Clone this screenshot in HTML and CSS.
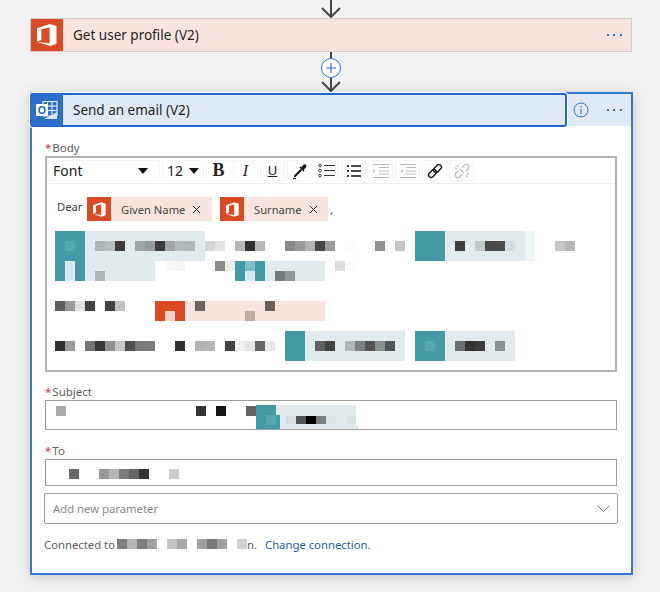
FILE: index.html
```html
<!DOCTYPE html>
<html lang="en">
<head>
<meta charset="utf-8">
<title>Send an email</title>
<link rel="stylesheet" href="styles.css">
</head>
<body>
<main class="flow">
  <svg class="arrow-top" width="24" height="18" viewBox="0 0 24 18"><path d="M12 0V16M3 8l9 9 9-9" fill="none" stroke="#484644" stroke-width="2"/></svg>

  <section class="step step-office">
    <div class="step-icon icon-office">
      <svg width="20" height="22" viewBox="0 0 20 22"><path fill="#fff" d="M0 17.8V4.3L12.6 0l6.9 2v18l-6.9 2L0 17.8l12.6 1.5V3.4L4.4 5.2v10.8z"/></svg>
    </div>
    <div class="step-title">Get user profile (V2)</div>
    <div class="dots"><i></i><i></i><i></i></div>
  </section>

  <svg class="connector" width="24" height="40" viewBox="0 0 24 40"><path d="M12 0V6M12 26V38M3 30l9 9 9-9" fill="none" stroke="#484644" stroke-width="2"/><circle cx="12" cy="16" r="9.5" fill="#fff" stroke="#2f6fc9"/><path d="M7 16H17M12 11V21" stroke="#2f6fc9" stroke-width="1.2"/></svg>

  <section class="card">
    <header class="card-head">
      <div class="title-box">
        <div class="step-icon icon-outlook">
          <svg width="22" height="20" viewBox="0 0 22 20"><path d="M7 1.500H21V16H7z" fill="#2a6fcb" stroke="#fff"/><path d="M7 6H21M7 10.500H21M11.500 1.500V16M16 1.500V16" stroke="#fff" stroke-width="1"/><path d="M8 19H21V12L14 16z" fill="#dce8f7"/><rect x="0" y="4" width="12" height="12" rx="1" fill="#fff"/><ellipse cx="6" cy="10" rx="3" ry="3.300" fill="none" stroke="#2a6fcb" stroke-width="1.600"/></svg>
        </div>
        <div class="step-title">Send an email (V2)</div>
      </div>
      <div class="head-actions">
        <svg width="16" height="16" viewBox="0 0 16 16"><circle cx="8" cy="8" r="7" fill="none" stroke="#2f6fc9"/><path d="M8 7V12M8 4V5.500" stroke="#2f6fc9" stroke-width="1.200"/></svg>
        <div class="dots"><i></i><i></i><i></i></div>
      </div>
    </header>

    <div class="card-body">
      <label class="field-label first"><span class="req">*</span>Body</label>
      <div class="editor">
        <div class="toolbar">
          <div class="tb tb-font"><span>Font</span><b class="caret"></b></div>
          <div class="tb tb-size"><span>12</span><b class="caret"></b></div>
          <div class="tb tb-b">B</div>
          <div class="tb tb-i">I</div>
          <div class="tb tb-u">U</div>
          <div class="tb"><svg width="16" height="16" viewBox="0 0 16 16"><path d="M2 12.500L8.500 6l1.500 1.500L3.500 14H2z" fill="#111"/><path d="M9 4.500l2.500-2.700a1.500 1.500 0 0 1 2.500 2.500L11.500 7z" fill="#111"/><path d="M8 4l4 4" stroke="#111" stroke-width="1.500"/><path d="M1 15.500H4" stroke="#111"/></svg></div>
          <div class="tb"><svg width="17" height="15" viewBox="0 0 17 15"><path d="M6 2.500H17M6 7.500H17M6 12.500H17" stroke="#333" stroke-width="1.200"/><g fill="none" stroke="#333"><circle cx="2" cy="2.500" r="1.300"/><circle cx="2" cy="7.500" r="1.300"/><circle cx="2" cy="12.500" r="1.300"/></g></svg></div>
          <div class="tb"><svg width="14" height="14" viewBox="0 0 14 14"><path d="M4 2H14M4 7H14M4 12H14" stroke="#111" stroke-width="1.500"/><path d="M0 1H2V3H0zM0 6H2V8H0zM0 11H2V13H0z" fill="#333"/></svg></div>
          <div class="tb"><svg width="18" height="14" viewBox="0 0 18 14"><path d="M1 .5H17M7 3.500H17M7 7H17M7 10H17M1 13.500H17" stroke="#bbb"/><path d="M1 5l3 2-3 2z" fill="#ccc"/></svg></div>
          <div class="tb"><svg width="18" height="14" viewBox="0 0 18 14"><path d="M1 .5H17M7 3.500H17M7 7H17M7 10H17M1 13.500H17" stroke="#bbb"/><path d="M4 5L1 7l3 2z" fill="#ccc"/></svg></div>
          <div class="tb"><svg width="16" height="16" viewBox="0 0 16 16"><g fill="none" stroke="#111" stroke-width="1.400"><rect x="8" y="1" width="5" height="9" rx="2.500" transform="rotate(45 10.500 5.500)"/><rect x="3" y="6" width="5" height="9" rx="2.500" transform="rotate(45 5.500 10.500)"/></g></svg></div>
          <div class="tb"><svg width="16" height="16" viewBox="0 0 16 16"><g fill="none" stroke="#bbb" stroke-width="1.300"><path d="M8 5l2.500-3a2.700 2.700 0 0 1 4 3.500L12 8"/><path d="M8 11l-2.500 3a2.700 2.700 0 0 1-4-3.500L4 8"/><path d="M6 6l4 4M3 2l1 2M1 5l2 .5M13 14l-1-2M15 11l-2-.5"/></g></svg></div>
        </div>

        <div class="editor-text">
          <div class="token-line">
            <span class="dear">Dear</span>
            <span class="chip chip-given"><span class="chip-icon"><svg width="13" height="15" viewBox="0 0 20 22"><path fill="#fff" d="M0 17.8V4.3L12.6 0l6.900 2v18l-6.900 2L0 17.800l12.600 1.500V3.400L4.400 5.200v10.800z"/></svg></span><span class="chip-text">Given Name</span><svg class="chip-x" width="9" height="9" viewBox="0 0 10 10"><path d="M1 1l8 8M9 1L1 9" stroke="#222" stroke-width="1.100"/></svg></span>
            <span class="chip chip-surname"><span class="chip-icon"><svg width="13" height="15" viewBox="0 0 20 22"><path fill="#fff" d="M0 17.8V4.3L12.6 0l6.900 2v18l-6.900 2L0 17.800l12.600 1.500V3.400L4.400 5.200v10.800z"/></svg></span><span class="chip-text">Surname</span><svg class="chip-x" width="9" height="9" viewBox="0 0 10 10"><path d="M1 1l8 8M9 1L1 9" stroke="#222" stroke-width="1.100"/></svg></span>
            <span class="comma">,</span>
          </div>

          <svg class="mosaic" width="525" height="130" viewBox="55 231 525 130" shape-rendering="crispEdges">
            <rect x="55" y="231" width="30" height="50" fill="#439ba5"/><rect x="65" y="241" width="10" height="10" fill="#53a7b0"/><rect x="65" y="261" width="10" height="20" fill="#d9eaee"/>
            <rect x="85" y="231" width="120" height="30" fill="#e1eaec"/><rect x="85" y="261" width="70" height="20" fill="#e1eaec"/>
            <g>
              <rect x="95" y="241" width="10" height="10" fill="#afb7b9"/><rect x="105" y="241" width="10" height="10" fill="#b8bfc0"/><rect x="115" y="241" width="10" height="10" fill="#3b3a39"/><rect x="135" y="241" width="10" height="10" fill="#a0a6a8"/><rect x="145" y="241" width="10" height="10" fill="#959a9c"/><rect x="155" y="241" width="10" height="10" fill="#3e3c3b"/><rect x="165" y="241" width="10" height="10" fill="#a1a5a7"/><rect x="175" y="241" width="10" height="10" fill="#b4bbbd"/><rect x="185" y="241" width="10" height="10" fill="#b1b8ba"/><rect x="205" y="241" width="10" height="10" fill="#d5d5d5"/><rect x="215" y="241" width="10" height="10" fill="#e3e3e3"/><rect x="235" y="241" width="10" height="10" fill="#b7b7b7"/><rect x="245" y="241" width="10" height="10" fill="#32302f"/><rect x="255" y="241" width="10" height="10" fill="#b8b8b8"/><rect x="285" y="241" width="10" height="10" fill="#888"/><rect x="295" y="241" width="10" height="10" fill="#999"/><rect x="305" y="241" width="10" height="10" fill="#b3b3b3"/><rect x="315" y="241" width="10" height="10" fill="#484644"/><rect x="325" y="241" width="10" height="10" fill="#9c9c9c"/><rect x="345" y="241" width="10" height="10" fill="#fcfcfc"/><rect x="375" y="241" width="10" height="10" fill="#919191"/><rect x="395" y="241" width="10" height="10" fill="#c3c3c3"/>
            </g>
            <rect x="415" y="231" width="30" height="30" fill="#439ba5"/><rect x="445" y="231" width="80" height="30" fill="#e1eaec"/><rect x="525" y="231" width="10" height="30" fill="#eff5f6"/>
            <rect x="455" y="241" width="10" height="10" fill="#3f3f3f"/><rect x="475" y="241" width="10" height="10" fill="#c2cacc"/><rect x="485" y="241" width="10" height="10" fill="#4a4a4a"/><rect x="495" y="241" width="10" height="10" fill="#4c4e4e"/><rect x="505" y="241" width="10" height="10" fill="#d5dde0"/><rect x="555" y="241" width="10" height="10" fill="#c7c7c7"/><rect x="565" y="241" width="10" height="10" fill="#b8b8b8"/>
            <rect x="95" y="271" width="10" height="10" fill="#adb5b7"/><rect x="165" y="261" width="10" height="10" fill="#f9f9f9"/><rect x="175" y="261" width="10" height="10" fill="#f5f5f5"/><rect x="215" y="261" width="10" height="10" fill="#8c8b8a"/><rect x="225" y="261" width="10" height="10" fill="#ececec"/>
            <rect x="235" y="261" width="30" height="20" fill="#439ba5"/><rect x="245" y="261" width="10" height="10" fill="#7fc0c8"/><rect x="245" y="271" width="10" height="10" fill="#d9eaee"/><rect x="265" y="261" width="60" height="20" fill="#e1eaec"/><rect x="275" y="271" width="10" height="10" fill="#757a7b"/><rect x="285" y="271" width="10" height="10" fill="#929899"/>
            <rect x="335" y="261" width="10" height="10" fill="#dcdcdc"/><rect x="345" y="261" width="10" height="10" fill="#fbfbfb"/>
            <rect x="55" y="301" width="10" height="10" fill="#5f5e5d"/><rect x="65" y="301" width="10" height="10" fill="#999"/><rect x="75" y="301" width="10" height="10" fill="#e0e0e0"/><rect x="85" y="301" width="10" height="10" fill="#434241"/><rect x="105" y="301" width="10" height="10" fill="#434241"/><rect x="115" y="301" width="10" height="10" fill="#c2c2c2"/>
            <rect x="155" y="301" width="30" height="20" fill="#dc4a21"/><rect x="165" y="311" width="10" height="10" fill="#f5d0c5"/><rect x="185" y="301" width="140" height="20" fill="#f9e5df"/><rect x="195" y="301" width="10" height="10" fill="#6d625e"/><rect x="265" y="301" width="10" height="10" fill="#6b5f5c"/><rect x="245" y="311" width="10" height="10" fill="#bdaea8"/>
            <rect x="55" y="341" width="10" height="10" fill="#33312f"/><rect x="65" y="341" width="10" height="10" fill="#999"/><rect x="85" y="341" width="10" height="10" fill="#737373"/><rect x="95" y="341" width="10" height="10" fill="#393837"/><rect x="105" y="341" width="10" height="10" fill="#8f8f8f"/><rect x="115" y="341" width="10" height="10" fill="#c8c8c8"/><rect x="125" y="341" width="10" height="10" fill="#504f4e"/><rect x="135" y="341" width="10" height="10" fill="#797877"/><rect x="145" y="341" width="10" height="10" fill="#7c7b7a"/><rect x="175" y="341" width="10" height="10" fill="#32312f"/><rect x="195" y="341" width="10" height="10" fill="#b4b4b4"/><rect x="205" y="341" width="10" height="10" fill="#b8b8b8"/><rect x="225" y="341" width="10" height="10" fill="#434241"/><rect x="235" y="341" width="10" height="10" fill="#f0f0f0"/><rect x="245" y="341" width="10" height="10" fill="#e4e4e4"/><rect x="255" y="341" width="10" height="10" fill="#666"/><rect x="265" y="341" width="10" height="10" fill="#e8e8e8"/>
            <rect x="285" y="331" width="20" height="30" fill="#439ba5"/><rect x="305" y="331" width="100" height="30" fill="#e1eaec"/><rect x="315" y="341" width="10" height="10" fill="#5d5f60"/><rect x="325" y="341" width="10" height="10" fill="#434342"/><rect x="345" y="341" width="10" height="10" fill="#aeb6b8"/><rect x="355" y="341" width="10" height="10" fill="#7b8082"/><rect x="365" y="341" width="10" height="10" fill="#525252"/><rect x="375" y="341" width="10" height="10" fill="#8a8f90"/><rect x="385" y="341" width="10" height="10" fill="#505557"/>
            <rect x="415" y="331" width="30" height="30" fill="#439ba5"/><rect x="425" y="341" width="10" height="10" fill="#53a7b0"/><rect x="445" y="331" width="70" height="30" fill="#e1eaec"/><rect x="455" y="341" width="10" height="10" fill="#6b6f71"/><rect x="465" y="341" width="10" height="10" fill="#343331"/><rect x="475" y="341" width="10" height="10" fill="#3e3d3d"/><rect x="495" y="341" width="10" height="10" fill="#8a9193"/>
          </svg>
        </div>
      </div>

      <label class="field-label"><span class="req">*</span>Subject</label>
      <div class="input input-subject">
        <svg class="mosaic" width="310" height="26" viewBox="56 404 310 26" shape-rendering="crispEdges">
          <rect x="56" y="406" width="10" height="10" fill="#aaa"/><rect x="196" y="406" width="10" height="10" fill="#333"/><rect x="216" y="406" width="10" height="10" fill="#141414"/><rect x="246" y="406" width="10" height="10" fill="#666"/>
          <rect x="256" y="405" width="24" height="24" fill="#439ba5"/><rect x="276" y="405" width="80" height="10" fill="#e1eaec"/><rect x="280" y="415" width="76" height="10" fill="#e1eaec"/><rect x="280" y="425" width="79" height="4" fill="#e1eaec"/><rect x="266" y="415" width="10" height="10" fill="#53a7b0"/>
          <rect x="286" y="416" width="10" height="8" fill="#d5dde0"/><rect x="296" y="416" width="10" height="8" fill="#4f5355"/><rect x="306" y="416" width="10" height="8" fill="#000"/><rect x="316" y="416" width="10" height="8" fill="#7b8082"/><rect x="326" y="416" width="10" height="8" fill="#dae3e6"/><rect x="346" y="416" width="10" height="8" fill="#dae3e6"/>
        </svg>
      </div>

      <label class="field-label label-to"><span class="req">*</span>To</label>
      <div class="input input-to">
        <svg class="mosaic" width="120" height="10" viewBox="69 469 120 10" shape-rendering="crispEdges">
          <rect x="69" y="469" width="10" height="10" fill="#6a6a6a"/><rect x="99" y="469" width="10" height="10" fill="#999"/><rect x="109" y="469" width="10" height="10" fill="#b5b5b5"/><rect x="119" y="469" width="10" height="10" fill="#7e7e7e"/><rect x="129" y="469" width="10" height="10" fill="#666"/><rect x="139" y="469" width="10" height="10" fill="#333"/><rect x="169" y="469" width="10" height="10" fill="#ccc"/>
        </svg>
      </div>

      <div class="param">
        <span>Add new parameter</span>
        <svg width="13" height="7" viewBox="0 0 13 7"><path d="M.5 .5L6.500 6.500 12.500 .5" fill="none" stroke="#8a8886"/></svg>
      </div>

      <div class="connected">
        <span class="conn-label">Connected to</span>
        <svg class="mosaic" width="130" height="10" viewBox="117 539 130 10" shape-rendering="crispEdges">
          <rect x="117" y="539" width="10" height="10" fill="#808080"/><rect x="127" y="539" width="10" height="10" fill="#b5b5b5"/><rect x="137" y="539" width="10" height="10" fill="#7e7e7e"/><rect x="147" y="539" width="10" height="10" fill="#a0a0a0"/><rect x="167" y="539" width="10" height="10" fill="#c5c5c5"/><rect x="177" y="539" width="10" height="10" fill="#a8a8a8"/><rect x="197" y="539" width="10" height="10" fill="#a0a0a0"/><rect x="207" y="539" width="10" height="10" fill="#777"/><rect x="217" y="539" width="10" height="10" fill="#a0a0a0"/><rect x="237" y="539" width="10" height="10" fill="#d0d0d0"/>
        </svg>
        <span class="end">n.</span>
        <a class="change" href="#">Change connection.</a>
      </div>
    </div>
  </section>
</main>
</body>
</html>
```
FILE: styles.css
```css
* { box-sizing: border-box; }
html, body { margin: 0; padding: 0; }
body {
  width: 660px;
  height: 592px;
  overflow: hidden;
  background: #f2f2f2;
  font-family: "Noto Sans", "Open Sans", sans-serif;
  color: #252423;
}
svg { display: block; }
.flow {
  display: flex;
  flex-direction: column;
  align-items: center;
  width: 602px;
  margin-left: 30px;
}
.arrow-top { height: 18px; flex: none; }
.connector { flex: none; position: relative; z-index: 1; }

.step {
  display: flex;
  align-items: center;
  width: 602px;
  height: 34px;
  border: 1px solid #d2d0ce;
}
.step-office { background: #f9e5df; }
.step-icon {
  flex: none;
  width: 32px;
  height: 100%;
  display: flex;
  align-items: center;
  justify-content: center;
}
.icon-office { background: #dc4a21; }
.icon-outlook { background: #2a6fcb; }
.step-title {
  flex: 1;
  padding-left: 10px;
  font-size: 13.500px;
  line-height: 20px;
}
.dots { display: flex; gap: 4.700px; padding-right: 9px; }
.dots i { width: 2px; height: 2px; background: #2f6fc9; }

.card {
  width: 603px;
  height: 483px;
  margin-right: -1px;
  background: #fff;
  border: 2px solid #3178d4;
  box-shadow: 0 2px 12px rgba(0, 0, 0, .18);
}
.card-head {
  display: flex;
  height: 32px;
  background: #e0eaf6;
}
.title-box {
  display: flex;
  align-items: center;
  flex: none;
  width: 537px;
  height: 34px;
  margin: -1px 0 -1px -2px;
  background: #e0eaf6;
  border: 2px solid #1f66c8;
  border-radius: 3px;
  box-shadow: 0 0 0 1px #fff;
  position: relative;
}
.title-box .step-icon { margin: -2px 0 -2px -1px; height: 32px; border-radius: 2px 0 0 2px; }
.head-actions {
  flex: 1;
  display: flex;
  align-items: center;
  justify-content: space-between;
  padding-left: 6px;
}
.head-actions .dots { padding-right: 9px; }

.card-body { padding: 14px 14px 0 13px; }
.field-label {
  display: block;
  height: 16px;
  margin-top: 12px;
  font-size: 11.500px;
  line-height: 16px;
  color: #605e5c;
}
.field-label.first { margin-top: 0; }
.field-label.label-to { margin-top: 13px; }
.req { color: #d13438; margin-right: 1px; }

.editor {
  height: 216px;
  border: 2px solid #b3b3b3;
}
.toolbar {
  display: flex;
  gap: 2px;
  height: 26px;
  padding-top: 2px;
  border-bottom: 1px solid #f0f0f0;
}
.tb {
  flex: none;
  display: flex;
  align-items: center;
  justify-content: center;
  width: 25px;
  height: 21px;
  border: 1px solid #f6f6f6;
  border-radius: 2px;
  color: #222;
}
.tb-font { width: 113px; justify-content: space-between; padding: 0 11px 0 5px; font-size: 14px; }
.tb-size { width: 42px; justify-content: space-between; padding: 0 4px 0 4px; font-size: 14px; }
.caret {
  width: 0;
  height: 0;
  border-left: 5px solid transparent;
  border-right: 5px solid transparent;
  border-top: 6px solid #111;
}
.tb-b { font: 700 18px "Liberation Serif", serif; }
.tb-i { font: italic 16px "Liberation Serif", serif; }
.tb-u { font: 13px "Liberation Sans", sans-serif; text-decoration: underline; }

.editor-text { padding: 13px 0 0 10px; }
.token-line { display: flex; align-items: center; height: 24px; }
.dear { width: 30px; font-size: 11.200px; line-height: 16px; margin-top: -4px; color: #444; }
.chip {
  display: flex;
  align-items: center;
  height: 24px;
  background: #f9e5df;
  font-size: 11.200px;
  color: #484644;
}
.chip-given { width: 125px; margin-right: 8px; }
.chip-surname { width: 108px; margin-right: 2px; }
.chip-icon {
  flex: none;
  width: 24px;
  height: 24px;
  display: flex;
  align-items: center;
  justify-content: center;
  background: #dc4a21;
}
.chip-text { padding-left: 10px; }
.chip-x { margin-left: 7px; }
.comma { font-size: 11px; color: #444; }
.editor-text > .mosaic { margin: 10px 0 0 -2px; }

.input {
  display: flex;
  align-items: flex-start;
  border: 1px solid #a19f9d;
}
.input-subject { height: 30px; padding: 3px 0 0 10px; }
.input-to { height: 27px; padding: 9px 0 0 23px; }
.param {
  display: flex;
  align-items: center;
  justify-content: space-between;
  height: 31px;
  margin: 7px -1px 0;
  padding: 0 7px 0 8px;
  border: 1px solid #a19f9d;
  border-radius: 2px;
  font-size: 11.300px;
  color: #8a8886;
}
.connected {
  display: flex;
  align-items: center;
  height: 16px;
  margin: 12px 0 0 -1px;
  font-size: 11.300px;
  color: #605e5c;
}
.conn-label { width: 73px; }
.end { width: 18px; }
.change { color: #1f5fa8; text-decoration: none; }
```
